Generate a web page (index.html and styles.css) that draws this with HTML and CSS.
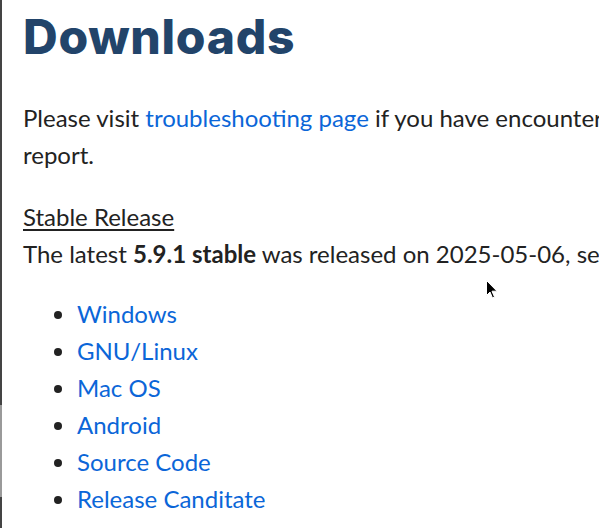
FILE: index.html
```html
<!DOCTYPE html>
<html lang="en">
<head>
<meta charset="utf-8">
<title>Downloads</title>
<link rel="stylesheet" href="styles.css">
</head>
<body>
<div class="edge"></div>
<main class="content">
  <h1 class="title">Downloads</h1>
  <p class="intro">Please visit <a href="#">troubleshooting page</a> if you have encountered any problem before submitting a bug report.</p>
  <p class="release">
    <span class="release-title">Stable Release</span><br>
    The latest <strong>5.9.1 stable</strong> was released on 2025-05-06, see the changelog for details.
  </p>
  <ul class="downloads">
    <li><a href="#">Windows</a></li>
    <li><a href="#">GNU/Linux</a></li>
    <li><a href="#">Mac OS</a></li>
    <li><a href="#">Android</a></li>
    <li><a href="#">Source Code</a></li>
    <li><a href="#">Release Canditate</a></li>
  </ul>
</main>
<svg class="cursor" width="12" height="19" viewBox="0 0 12 19" aria-hidden="true">
  <path d="M0.5 0.5 L0.5 15.5 L4 12 L6.5 18 L8.5 17 L6 11.2 L11 11.2 Z" fill="#000" stroke="#fff" stroke-width="1"/>
</svg>
</body>
</html>
```
FILE: styles.css
```css
html, body {
  margin: 0;
  padding: 0;
  overflow: hidden;
  background: #fff;
}
body {
  position: relative;
  height: 528px;
  font-family: "Lato", "Liberation Sans", sans-serif;
  font-size: 24px;
  line-height: 37px;
  color: #222;
}
.edge {
  position: absolute;
  left: 0;
  top: 0;
  width: 2px;
  height: 528px;
  background: linear-gradient(to bottom, #444 0, #444 405px, #9a9a9a 405px, #9a9a9a 497px, #444 497px, #444 100%);
}
.content {
  width: 1000px;
  padding: 0 0 0 23px;
}
.title {
  margin: 0;
  padding-top: 5px;
  font-family: "Inter", "Noto Sans", sans-serif;
  font-weight: 800;
  font-size: 48px;
  line-height: 64px;
  letter-spacing: 0.7px;
  color: #22446a;
}
.intro {
  margin: 30px 0 0;
}
.release {
  margin: 25px 0 0;
}
.release-title {
  text-decoration: underline;
  text-underline-offset: 3px;
}
.release strong {
  font-weight: 700;
}
a {
  color: #0b66d8;
  text-decoration: none;
}
.downloads {
  margin: 23px 0 0;
  padding-left: 54px;
}
.cursor {
  position: absolute;
  left: 486px;
  top: 280px;
}
```
